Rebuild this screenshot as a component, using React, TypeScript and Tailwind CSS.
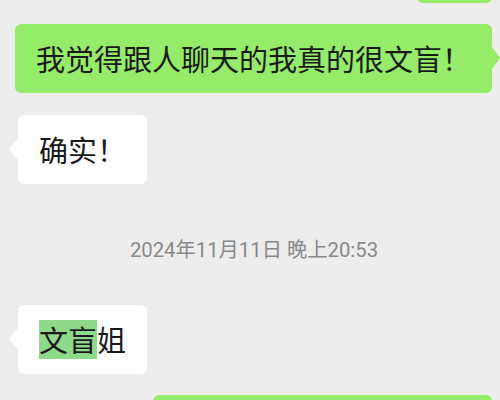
import React from "react";

const cjk = { fontFamily: '"Noto Sans CJK SC", "Noto Sans", sans-serif' };

function Bubble({
  side,
  children,
  className = "",
}: {
  side: "left" | "right";
  children?: React.ReactNode;
  className?: string;
}) {
  const isRight = side === "right";
  return (
    <div
      className={
        "relative rounded-[6px] px-[21px] py-[15px] text-[29px] leading-[39px] text-[#191919] " +
        (isRight ? "bg-[#95ec69] " : "bg-white ") +
        className
      }
      style={cjk}
    >
      <div
        className={
          "absolute top-[23px] h-0 w-0 border-y-[11px] border-y-transparent " +
          (isRight
            ? "right-[-8px] border-l-[8px] border-l-[#95ec69]"
            : "left-[-9px] border-r-[9px] border-r-white")
        }
      />
      <div className="relative whitespace-nowrap">{children}</div>
    </div>
  );
}

export default function App() {
  return (
    <div className="h-[400px] w-[500px] overflow-hidden bg-[#ededed]">
      <div className="mt-[-65px] flex flex-col">
        <div className="flex justify-end pr-[8px]">
          <Bubble side="right" className="h-[68px] w-[75px]" />
        </div>
        <div className="mt-[21px] flex justify-end pr-[8px]">
          <Bubble side="right">我觉得跟人聊天的我真的很文盲！</Bubble>
        </div>
        <div className="mt-[22px] flex justify-start pl-[18px]">
          <Bubble side="left">确实！</Bubble>
        </div>
        <div
          className="mt-[52px] flex h-[28px] items-center justify-center pl-[8px] text-[20.3px] leading-[28px] text-[#888888]"
          style={{ fontFamily: 'Roboto, "Noto Sans CJK SC", sans-serif' }}
        >
          2024年11月11日 晚上20:53
        </div>
        <div className="mt-[41px] flex justify-start pl-[18px]">
          <Bubble side="left">
            <span className="inline-block bg-[#8fd98a] leading-[39px]">文盲</span>
            姐
          </Bubble>
        </div>
        <div className="mt-[21px] flex justify-end pr-[8px]">
          <Bubble side="right" className="h-[68px] w-[339px]" />
        </div>
      </div>
    </div>
  );
}
